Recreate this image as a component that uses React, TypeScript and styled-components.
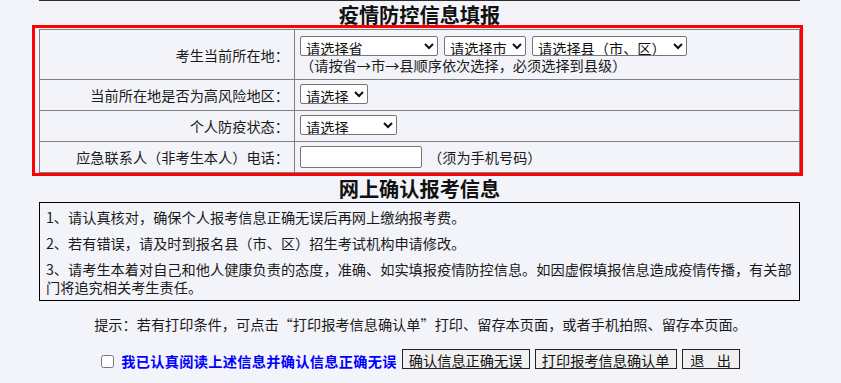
import styled, { createGlobalStyle } from "styled-components";

const GlobalStyle = createGlobalStyle`
  body {
    margin: 0;
    background: #f3f4f9;
    font-family: "Noto Sans CJK SC", "Noto Sans", sans-serif;
    font-size: 14.2px;
    color: #1a1a1a;
  }
`;

const Page = styled.div`
  width: 761px;
  margin-left: 39px;
`;

const TopLine = styled.div`
  border-top: 1px solid #2b2b2b;
`;

const Title = styled.h2<{ $top?: number }>`
  margin: 0;
  padding-top: ${(p) => p.$top ?? 0}px;
  font-size: 20.2px;
  line-height: 27px;
  font-weight: bold;
  text-align: center;
  color: #111;
`;

const Highlight = styled.div`
  width: 765px;
  margin-left: -4px;
  padding: 1px 0 0 4px;
  box-sizing: border-box;
  outline: 3px solid #ff0000;
`;

const Table = styled.table`
  width: 761px;
  border-collapse: collapse;
  border: 1px solid #333;
`;

const LabelCell = styled.td<{ $h: number }>`
  width: 249px;
  height: ${(p) => p.$h}px;
  padding: 0 5px 0 0;
  border: 1px solid #808080;
  text-align: right;
  vertical-align: middle;
  white-space: nowrap;
`;

const ValueCell = styled.td`
  padding: 0 0 0 5px;
  border: 1px solid #808080;
  vertical-align: middle;
`;

const SelectRow = styled.div`
  display: flex;
  gap: 6px;
`;

const Select = styled.select<{ $w: number }>`
  width: ${(p) => p.$w}px;
  height: 20px;
  padding: 0 0 0 1px;
  font-family: inherit;
  font-size: 14.2px;
  color: #111;
  background: #fff;
  border: 1px solid #767676;
  border-radius: 2px;
`;

const Hint = styled.div`
  line-height: 18px;
`;

const InlineRow = styled.div`
  display: flex;
  align-items: center;
`;

const PhoneInput = styled.input`
  width: 122px;
  height: 22px;
  box-sizing: border-box;
  border: 1px solid #767676;
  border-radius: 2px;
  background: #fff;
  margin: 0;
`;

const Note = styled.span`
  margin-left: 6px;
`;

const NoticeBox = styled.div`
  border: 1px solid #000;
  padding: 5px 5px 4px 6px;
  display: flex;
  flex-direction: column;
  gap: 8px;
`;

const NoticeItem = styled.p`
  margin: 0;
  line-height: 18px;
`;

const Tip = styled.div`
  margin-top: 14px;
  line-height: 18px;
  text-align: center;
`;

const ActionRow = styled.div`
  margin-top: 16px;
  display: flex;
  justify-content: center;
  align-items: center;
  height: 20px;
`;

const Check = styled.input`
  width: 13px;
  height: 13px;
  margin: 4px 7px 0 0;
`;

const Agree = styled.label`
  color: #0000ff;
  font-weight: bold;
  line-height: 18px;
  letter-spacing: 0.3px;
  padding-top: 4px;
  margin-right: 0;
`;

const Button = styled.button<{ $w: number }>`
  width: ${(p) => p.$w}px;
  height: 20px;
  box-sizing: border-box;
  margin-left: 5px;
  padding: 2px 0 0;
  line-height: 16px;
  font-family: inherit;
  font-size: 14.2px;
  color: #111;
  background: #f0f0f0;
  border: 1px solid #222;
  border-radius: 0;
  white-space: pre;
  word-spacing: 3px;
  overflow: hidden;
`;

export default function App() {
  return (
    <>
      <GlobalStyle />
      <Page>
        <TopLine />
        <Title>疫情防控信息填报</Title>
        <Highlight>
          <Table>
            <tbody>
              <tr>
                <LabelCell $h={49}>考生当前所在地：</LabelCell>
                <ValueCell>
                  <SelectRow>
                    <Select $w={138}>
                      <option>请选择省</option>
                    </Select>
                    <Select $w={82}>
                      <option>请选择市</option>
                    </Select>
                    <Select $w={155}>
                      <option>请选择县（市、区）</option>
                    </Select>
                  </SelectRow>
                  <Hint>（请按省→市→县顺序依次选择，必须选择到县级）</Hint>
                </ValueCell>
              </tr>
              <tr>
                <LabelCell $h={30}>当前所在地是否为高风险地区：</LabelCell>
                <ValueCell>
                  <Select $w={68}>
                    <option>请选择</option>
                  </Select>
                </ValueCell>
              </tr>
              <tr>
                <LabelCell $h={30}>个人防疫状态：</LabelCell>
                <ValueCell>
                  <Select $w={97}>
                    <option>请选择</option>
                  </Select>
                </ValueCell>
              </tr>
              <tr>
                <LabelCell $h={30}>应急联系人（非考生本人）电话：</LabelCell>
                <ValueCell>
                  <InlineRow>
                    <PhoneInput type="text" />
                    <Note>（须为手机号码）</Note>
                  </InlineRow>
                </ValueCell>
              </tr>
            </tbody>
          </Table>
        </Highlight>
        <Title $top={2}>网上确认报考信息</Title>
        <NoticeBox>
          <NoticeItem>1、请认真核对，确保个人报考信息正确无误后再网上缴纳报考费。</NoticeItem>
          <NoticeItem>2、若有错误，请及时到报名县（市、区）招生考试机构申请修改。</NoticeItem>
          <NoticeItem>
            3、请考生本着对自己和他人健康负责的态度，准确、如实填报疫情防控信息。如因虚假填报信息造成疫情传播，有关部门将追究相关考生责任。
          </NoticeItem>
        </NoticeBox>
      </Page>
      <Tip>
        提示：若有打印条件，可点击“打印报考信息确认单”打印、留存本页面，或者手机拍照、留存本页面。
      </Tip>
      <ActionRow>
        <Check type="checkbox" id="agree" />
        <Agree htmlFor="agree">我已认真阅读上述信息并确认信息正确无误</Agree>
        <Button $w={128}>确认信息正确无误</Button>
        <Button $w={142}>打印报考信息确认单</Button>
        <Button $w={58}>{"退  出"}</Button>
      </ActionRow>
    </>
  );
}
